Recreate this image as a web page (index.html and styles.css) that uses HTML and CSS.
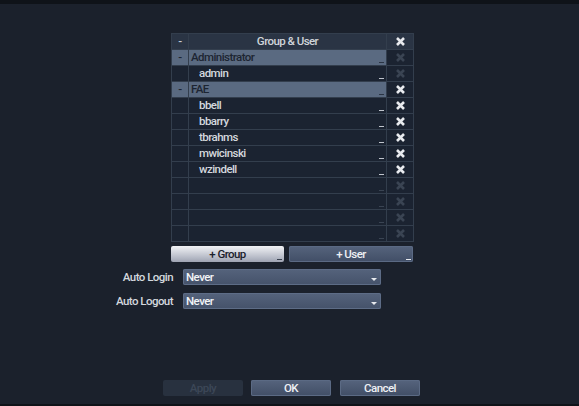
FILE: index.html
```html
<!DOCTYPE html>
<html>
<head>
<meta charset="utf-8">
<link rel="stylesheet" href="styles.css">
</head>
<body>
<div class="topbar"></div>
<main class="page">
  <div class="tree">
    <div class="cell c1 head">-</div>
    <div class="cell c2 head title">Group &amp; User</div>
    <div class="cell c3 head"><svg class="x" viewBox="0 0 9 9"><path d="M1 1L8 8M8 1L1 8"/></svg></div>

    <div class="cell c1 grp">-</div>
    <div class="cell c2 grp">Administrator<span class="mark"></span></div>
    <div class="cell c3 off"><svg class="x" viewBox="0 0 9 9"><path d="M1 1L8 8M8 1L1 8"/></svg></div>

    <div class="cell c1"></div>
    <div class="cell c2 user">admin<span class="mark"></span></div>
    <div class="cell c3 off"><svg class="x" viewBox="0 0 9 9"><path d="M1 1L8 8M8 1L1 8"/></svg></div>

    <div class="cell c1 grp">-</div>
    <div class="cell c2 grp">FAE<span class="mark"></span></div>
    <div class="cell c3"><svg class="x" viewBox="0 0 9 9"><path d="M1 1L8 8M8 1L1 8"/></svg></div>

    <div class="cell c1"></div>
    <div class="cell c2 user">bbell<span class="mark"></span></div>
    <div class="cell c3"><svg class="x" viewBox="0 0 9 9"><path d="M1 1L8 8M8 1L1 8"/></svg></div>

    <div class="cell c1"></div>
    <div class="cell c2 user">bbarry<span class="mark"></span></div>
    <div class="cell c3"><svg class="x" viewBox="0 0 9 9"><path d="M1 1L8 8M8 1L1 8"/></svg></div>

    <div class="cell c1"></div>
    <div class="cell c2 user">tbrahms<span class="mark"></span></div>
    <div class="cell c3"><svg class="x" viewBox="0 0 9 9"><path d="M1 1L8 8M8 1L1 8"/></svg></div>

    <div class="cell c1"></div>
    <div class="cell c2 user">mwicinski<span class="mark"></span></div>
    <div class="cell c3"><svg class="x" viewBox="0 0 9 9"><path d="M1 1L8 8M8 1L1 8"/></svg></div>

    <div class="cell c1"></div>
    <div class="cell c2 user">wzindell<span class="mark"></span></div>
    <div class="cell c3"><svg class="x" viewBox="0 0 9 9"><path d="M1 1L8 8M8 1L1 8"/></svg></div>

    <div class="cell c1"></div>
    <div class="cell c2 empty"><span class="mark"></span></div>
    <div class="cell c3 off"><svg class="x" viewBox="0 0 9 9"><path d="M1 1L8 8M8 1L1 8"/></svg></div>

    <div class="cell c1"></div>
    <div class="cell c2 empty"><span class="mark"></span></div>
    <div class="cell c3 off"><svg class="x" viewBox="0 0 9 9"><path d="M1 1L8 8M8 1L1 8"/></svg></div>

    <div class="cell c1"></div>
    <div class="cell c2 empty"><span class="mark"></span></div>
    <div class="cell c3 off"><svg class="x" viewBox="0 0 9 9"><path d="M1 1L8 8M8 1L1 8"/></svg></div>

    <div class="cell c1"></div>
    <div class="cell c2 empty"><span class="mark"></span></div>
    <div class="cell c3 off"><svg class="x" viewBox="0 0 9 9"><path d="M1 1L8 8M8 1L1 8"/></svg></div>
  </div>

  <div class="addbtns">
    <button class="btn light wide1">+ Group<span class="mark"></span></button>
    <button class="btn wide2">+ User<span class="mark"></span></button>
  </div>

  <div class="form">
    <label class="lbl">Auto Login</label>
    <div class="select">Never<span class="arrow"></span></div>
    <label class="lbl">Auto Logout</label>
    <div class="select">Never<span class="arrow"></span></div>
  </div>

  <div class="actions">
    <button class="btn act disabled">Apply</button>
    <button class="btn act">OK</button>
    <button class="btn act">Cancel</button>
  </div>
</main>
<div class="bottombar"></div>
</body>
</html>
```
FILE: styles.css
```css
* { box-sizing: border-box; }
html, body {
  margin: 0;
  padding: 0;
  width: 579px;
  height: 406px;
  overflow: hidden;
  background: #1b212c;
  font-family: Roboto, "Liberation Sans", sans-serif;
  font-weight: 500;
  font-size: 11.5px;
  letter-spacing: -0.55px;
  color: #d4d8de;
}
.topbar { height: 4px; background: #0f1319; }
.bottombar { height: 2px; background: #0f1319; }
.page {
  height: 400px;
  display: flex;
  flex-direction: column;
}
.tree {
  margin-top: 29px;
  margin-left: 171px;
  width: 243px;
  display: grid;
  grid-template-columns: 16px 197px 26px;
  grid-auto-rows: 15px;
  gap: 1px;
  padding: 1px;
  background: #333e4d;
}
.cell {
  background: #1b2331;
  position: relative;
  display: flex;
  align-items: center;
  line-height: 15px;
  white-space: nowrap;
}
.c1 { justify-content: center; color: #c8ccd4; }
.c3 { justify-content: center; }
.head { background: #2a3444; }
.title { justify-content: center; color: #d0d4da; }
.grp { background: #5a6a81; color: #1d2532; }
.c2.grp { padding-left: 2px; }
.c1.grp { color: #1d2532; }
.user { padding-left: 10px; color: #d4d8de; }
.x { width: 9px; height: 9px; }
.x path { stroke: #e8eaee; stroke-width: 2.6; fill: none; }
.off .x path { stroke: #3a4453; }
.mark {
  position: absolute;
  right: 2px;
  bottom: 2px;
  width: 5px;
  height: 1px;
  background: #bfc4cc;
}
.grp .mark { background: #2a3444; }
.empty .mark { background: #3a4453; }

.btn {
  font: inherit;
  letter-spacing: inherit;
  border: 0;
  padding: 0;
  height: 16px;
  border-radius: 2px;
  position: relative;
  color: #eef0f4;
  background: linear-gradient(#56647d, #414e66);
  box-shadow: inset 0 0 0 1px #5b6a84;
  display: flex;
  align-items: center;
  justify-content: center;
}
.btn .mark { right: 2px; bottom: 2px; background: #e8eaee; }
.btn.light {
  background: linear-gradient(#f2f3f6, #b8bcc8 70%, #9ea3b2);
  box-shadow: none;
  color: #1b212c;
}
.btn.light .mark { background: #39414f; }
.addbtns {
  margin-top: 4px;
  margin-left: 171px;
  display: flex;
  gap: 5px;
}
.wide1 { width: 113px; }
.wide2 { width: 124px; }

.form {
  margin-top: 7px;
  margin-left: 111px;
  display: grid;
  grid-template-columns: 62px 198px;
  column-gap: 10px;
  row-gap: 8px;
  grid-auto-rows: 16px;
}
.lbl {
  text-align: right;
  line-height: 16px;
  color: #d4d8de;
}
.select {
  position: relative;
  height: 16px;
  line-height: 16px;
  padding-left: 3px;
  border-radius: 2px;
  color: #f2f4f7;
  background: linear-gradient(#55637c, #45526a);
  box-shadow: inset 0 0 0 1px #5d6c86;
}
.arrow {
  position: absolute;
  right: 4px;
  bottom: 4px;
  width: 0;
  height: 0;
  border-left: 3px solid transparent;
  border-right: 3px solid transparent;
  border-top: 3px solid #e8eaee;
}

.actions {
  margin-top: auto;
  margin-bottom: 8px;
  margin-left: 163px;
  display: flex;
  gap: 8px;
}
.act { width: 80px; }
.act:last-child { margin-left: 1px; }
.btn.disabled {
  background: #28313f;
  box-shadow: none;
  color: #3c4757;
}
```
